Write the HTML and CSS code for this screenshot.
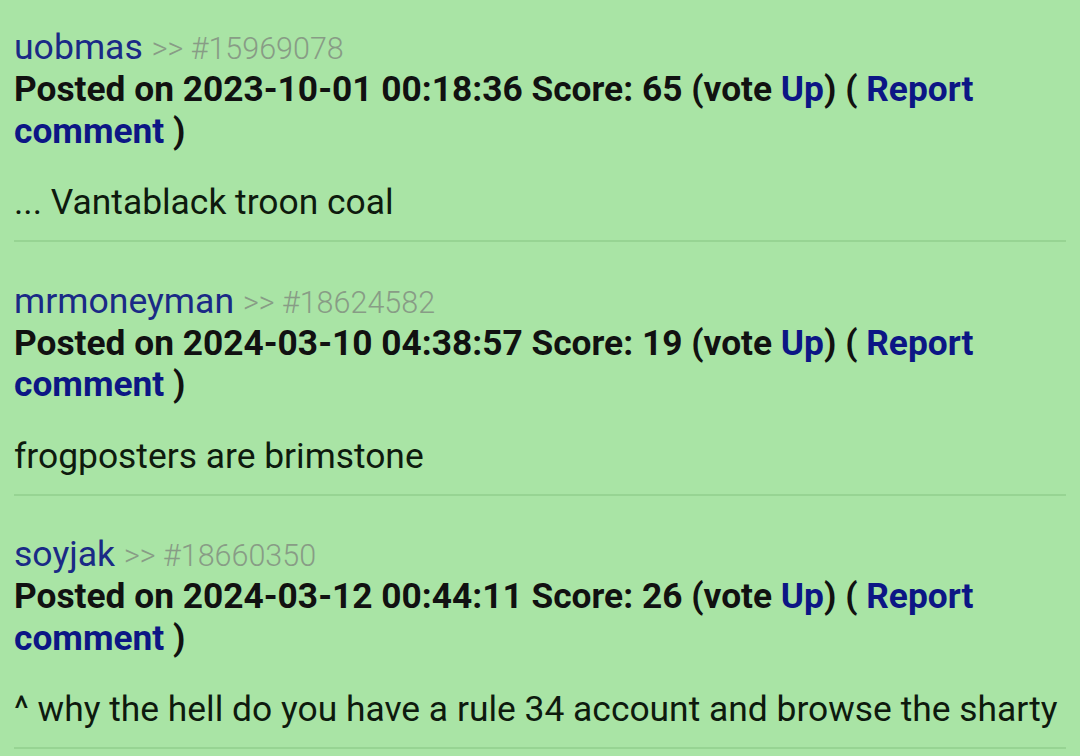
FILE: index.html
```html
<!DOCTYPE html>
<html lang="en">
<head>
<meta charset="UTF-8">
<meta name="viewport" content="width=device-width, initial-scale=1.0">
<title>Comments</title>
<link rel="stylesheet" href="styles.css">
</head>
<body>
<div class="comments">
    <div class="comment">
        <div class="comment-head">
            <a class="user" href="#">uobmas</a>
            <span class="post-id">&gt;&gt; #15969078</span>
        </div>
        <div class="comment-meta">
            Posted on 2023-10-01 00:18:36 Score: 65 (vote <a href="#">Up</a>) ( <a href="#">Report comment</a> )
        </div>
        <p class="comment-body">... Vantablack troon coal</p>
    </div>
    <div class="comment">
        <div class="comment-head">
            <a class="user" href="#">mrmoneyman</a>
            <span class="post-id">&gt;&gt; #18624582</span>
        </div>
        <div class="comment-meta">
            Posted on 2024-03-10 04:38:57 Score: 19 (vote <a href="#">Up</a>) ( <a href="#">Report comment</a> )
        </div>
        <p class="comment-body">frogposters are brimstone</p>
    </div>
    <div class="comment">
        <div class="comment-head">
            <a class="user" href="#">soyjak</a>
            <span class="post-id">&gt;&gt; #18660350</span>
        </div>
        <div class="comment-meta">
            Posted on 2024-03-12 00:44:11 Score: 26 (vote <a href="#">Up</a>) ( <a href="#">Report comment</a> )
        </div>
        <p class="comment-body">^ why the hell do you have a rule 34 account and browse the sharty</p>
    </div>
</div>
</body>
</html>
```

FILE: styles.css
```css
body {
    font-family: Roboto, "Liberation Sans", sans-serif;
    margin: 0;
    padding: 25px 14px 0;
    background-color: #a9e4a5;
    color: #111;
    overflow: hidden;
}
a {
    color: #0c1685;
    text-decoration: none;
}
.comment {
    padding-bottom: 18px;
    border-bottom: 2px solid #97d493;
    margin-bottom: 36.5px;
}
.comment-head {
    font-size: 35.6px;
    line-height: 44px;
}
.comment-head .user {
    color: #1a2a86;
}
.post-id {
    font-size: 30.5px;
    line-height: 1;
    font-weight: 300;
    color: #889c86;
}
.comment-meta {
    font-size: 35.3px;
    line-height: 41.5px;
    font-weight: bold;
}
.comment-body {
    margin: 30px 0 0;
    font-size: 35.4px;
    line-height: 40px;
    color: #0e1a0e;
}
```
